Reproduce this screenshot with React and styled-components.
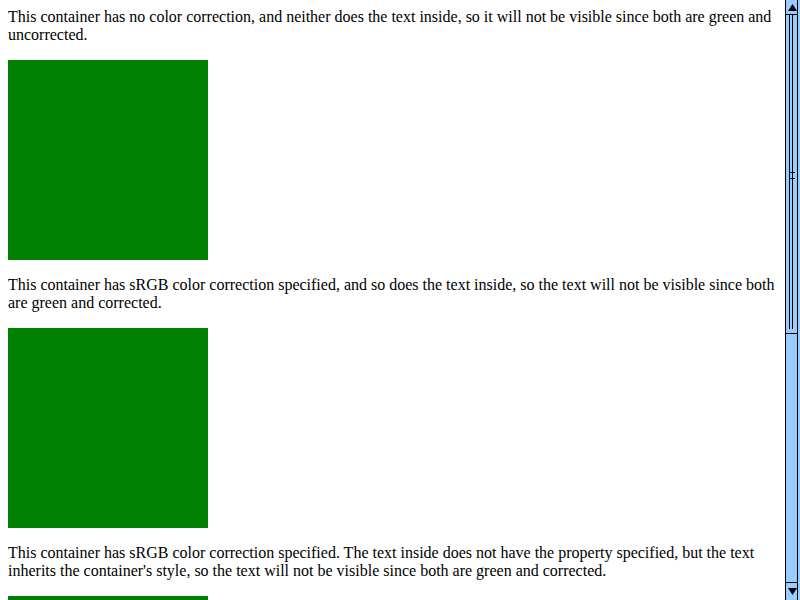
import styled, { createGlobalStyle } from "styled-components";

const GlobalStyle = createGlobalStyle`
  html, body {
    overflow: hidden;
    height: 100%;
  }
  body {
    margin: 8px;
    background: #ffffff;
    font-family: "Liberation Serif", "Times New Roman", serif;
    font-size: 16px;
    line-height: 18px;
    color: #000000;
  }
`;

const Page = styled.div`
  margin-right: 15px;
`;

const Container = styled.div``;

const Swatch = styled.div`
  width: 200px;
  height: 200px;
  margin: 16px 0;
  background: #008000;
`;

const Bar = styled.div`
  position: fixed;
  top: 0;
  right: 0;
  width: 15px;
  height: 600px;
  background: #99ccff;
  display: flex;
  flex-direction: column;
`;

const Track = styled.div`
  flex: 1;
  margin-right: 2px;
  border-left: 1px solid #000;
  border-right: 1px solid #000;
  display: flex;
  flex-direction: column;
`;

const Button = styled.div`
  height: ${(p) => p.$h}px;
  box-sizing: border-box;
  border: 1px solid #000;
  border-width: ${(p) => (p.$down ? "1px 1px 0 1px" : "0 1px 1px 1px")};
  margin-right: 2px;
  display: flex;
  align-items: center;
  justify-content: center;
  padding-left: 1px;
`;

const Thumb = styled.div`
  height: 319px;
  box-sizing: border-box;
  border-bottom: 1px solid #000;
  position: relative;
`;

const CenterLine = styled.div`
  position: absolute;
  left: 6px;
  top: 0;
  bottom: 4px;
  width: 1px;
  background: #000;
`;

const SideLine = styled.div`
  position: absolute;
  left: 3px;
  top: 0;
  bottom: 4px;
  width: 1px;
  background: #000;
`;

const Grip = styled.div`
  position: absolute;
  left: 4px;
  top: ${(p) => p.$top}px;
  width: 5px;
  height: 1px;
  background: #000;
`;

function Arrow({ down }) {
  return (
    <svg width="9" height="9" viewBox="0 0 9 9">
      <polygon
        points={down ? "0,1 9,1 4.5,8" : "4.5,1 9,8 0,8"}
        fill="#000"
      />
    </svg>
  );
}

function ScrollBar() {
  return (
    <Bar>
      <Button $h={15}>
        <Arrow />
      </Button>
      <Track>
        <Thumb>
          <SideLine />
          <CenterLine />
          <Grip $top={157} />
          <Grip $top={163} />
        </Thumb>
      </Track>
      <Button $h={18} $down>
        <Arrow down />
      </Button>
    </Bar>
  );
}

const sections = [
  "This container has no color correction, and neither does the text inside, so it will not be visible since both are green and uncorrected.",
  "This container has sRGB color correction specified, and so does the text inside, so the text will not be visible since both are green and corrected.",
  "This container has sRGB color correction specified. The text inside does not have the property specified, but the text inherits the container's style, so the text will not be visible since both are green and corrected.",
];

export default function App() {
  return (
    <>
      <GlobalStyle />
      <Page>
        {sections.map((text, i) => (
          <Container key={i}>
            {text}
            <Swatch />
          </Container>
        ))}
      </Page>
      <ScrollBar />
    </>
  );
}
